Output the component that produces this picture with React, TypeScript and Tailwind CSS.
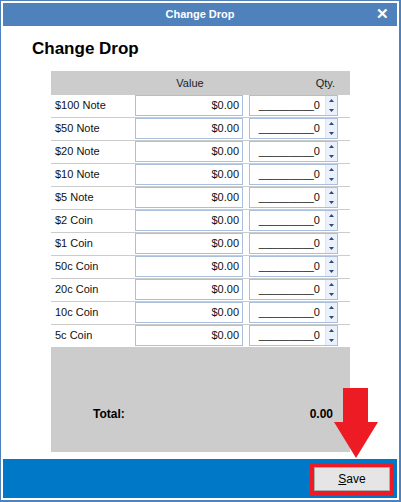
import React from "react";

const rows = [
  "$100 Note",
  "$50 Note",
  "$20 Note",
  "$10 Note",
  "$5 Note",
  "$2 Coin",
  "$1 Coin",
  "50c Coin",
  "20c Coin",
  "10c Coin",
  "5c Coin",
];

function Spinner() {
  return (
    <div className="flex h-full w-[12px] flex-col border-l border-[#dbe5f3] bg-[#eaf1fb]">
      <div className="flex flex-1 items-center justify-center">
        <svg width="5" height="3" viewBox="0 0 5 3">
          <path d="M2.5 0 L5 3 L0 3 Z" fill="#2b4a7a" />
        </svg>
      </div>
      <div className="flex flex-1 items-center justify-center">
        <svg width="5" height="3" viewBox="0 0 5 3">
          <path d="M0 0 L5 0 L2.5 3 Z" fill="#2b4a7a" />
        </svg>
      </div>
    </div>
  );
}

export default function App() {
  return (
    <div
      className="relative box-border flex h-[502px] w-[401px] flex-col border-b-2 border-l border-r-2 border-t border-[#4f81bd] bg-white p-[2px]"
      style={{ fontFamily: '"Liberation Sans", Arial, sans-serif' }}
    >
      {/* Title bar */}
      <div className="relative flex h-[23px] shrink-0 items-center justify-center bg-[#4f81bd]">
        <span className="text-[11px] font-bold text-white">Change Drop</span>
        <span className="absolute right-[8px] top-[1px] text-[15px] font-bold leading-[20px] text-white">
          ✕
        </span>
      </div>

      {/* Content */}
      <div className="flex h-[433px] shrink-0 flex-col">
        <div className="pl-[29px] pt-[12px] text-[17px] font-bold leading-[22px] text-black">
          Change Drop
        </div>
        <div className="mt-[11px] ml-[48px] flex w-[299px] flex-col">
          {/* Header */}
          <div className="flex h-[24px] items-center bg-[#cccccc] text-[11px] text-[#222]">
            <div className="w-[84px]" />
            <div className="w-[108px] pl-[2px] text-center">Value</div>
            <div className="flex-1 pr-[15px] text-right">Qty.</div>
          </div>
          {rows.map((r) => (
            <div
              key={r}
              className="flex h-[23px] items-start border-b border-[#cccccc] bg-white text-[11px] text-[#111]"
            >
              <div className="flex h-[21px] w-[84px] items-center pl-[4px]">{r}</div>
              <div className="flex h-[21px] w-[108px] items-center justify-end border border-[#a9bfdc] pr-[3px]">
                $0.00
              </div>
              <div className="ml-[6px] flex h-[21px] w-[89px] items-stretch border border-[#a9bfdc]">
                <div className="flex flex-1 items-center justify-end pr-[5px]">_________0</div>
                <Spinner />
              </div>
            </div>
          ))}
          {/* Totals */}
          <div className="flex h-[104px] items-start bg-[#cccccc] pt-[57px] text-[12px] font-bold text-black">
            <div className="pl-[42px]">Total:</div>
            <div className="flex-1 pr-[17px] text-right">0.00</div>
          </div>
        </div>
      </div>

      {/* Footer */}
      <div className="flex h-[39px] shrink-0 items-center justify-end bg-[#0078c8] pr-[3px]">
        <div className="box-border h-[32px] w-[84px] border-[4px] border-[#ed1c24] bg-[#e1e1e1] p-0">
          <div className="flex h-full w-full items-center justify-center border border-[#adadad] bg-[#e5e5e5] text-[12px] text-black">
            <span>
              <span className="underline">S</span>ave
            </span>
          </div>
        </div>
      </div>

      {/* Red arrow overlay */}
      <svg
        className="absolute left-[331px] top-[385px]"
        width="48"
        height="74"
        viewBox="0 0 48 74"
      >
        <path d="M11 2 L36 2 L36 36 L46 36 L24 72 L2 36 L11 36 Z" fill="#ed1c24" />
      </svg>
    </div>
  );
}
